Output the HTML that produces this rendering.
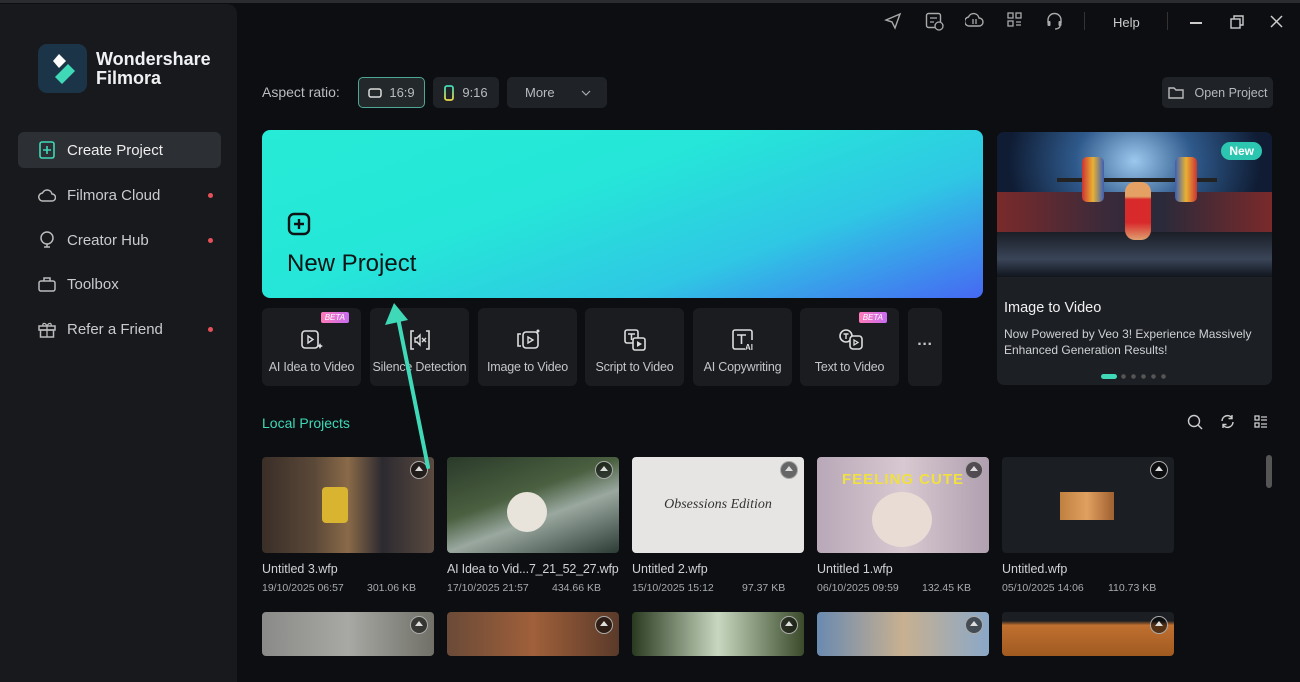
<!DOCTYPE html>
<html><head><meta charset="utf-8"><style>
*{margin:0;padding:0;box-sizing:border-box}
body{width:1300px;height:682px;background:#0c0e11;font-family:"Liberation Sans",sans-serif;color:#d8dadd;position:relative;overflow:hidden}
.abs{position:absolute}
.side{left:0;top:4px;width:237px;height:678px;background:#17191c;border-radius:0 10px 0 0}
.nav{position:absolute;left:18px;width:203px;height:36px;border-radius:6px;display:flex;align-items:center;padding-left:20px;font-size:15px;color:#c9cbce}
.nav svg{margin-right:11px;width:18px}
.dot{position:absolute;right:8px;top:16px;width:5px;height:5px;border-radius:50%;background:#e5505a}
.btn{position:absolute;top:77px;height:31px;border-radius:5px;background:#1f2226;font-size:13px;color:#b8bbbf;display:flex;align-items:center;justify-content:center}
.tile{position:absolute;top:308px;width:99px;height:78px;background:#1a1c20;border-radius:6px;font-size:12.5px;color:#c3c5c8;text-align:center}
.tile svg{position:absolute;left:38px;top:20px}
.tile span{position:absolute;left:0;right:0;top:52px;white-space:nowrap;letter-spacing:-0.2px}
.beta{position:absolute;right:12px;top:4px;background:linear-gradient(90deg,#ff7ab8,#c86cf0);font-size:8px;color:#fff;padding:1px 4px;border-radius:2px;font-style:italic}
.th{position:absolute;width:172px;height:96px;border-radius:4px;overflow:hidden}
.up{position:absolute;right:6px;top:4px;width:18px;height:18px;border-radius:50%;background:rgba(0,0,0,.55);border:1px solid #aaa}
.up:after{content:"";position:absolute;left:4px;top:4px;width:0;height:0;border-left:4px solid transparent;border-right:4px solid transparent;border-bottom:5px solid #ddd}
.nm{position:absolute;font-size:12.5px;color:#d0d2d5}
.dt{position:absolute;font-size:10.5px;color:#a8abaf}
.ti{position:absolute;top:12px}
</style></head><body>
<div class="abs" style="left:0;top:0;width:1300px;height:3px;background:#2a2c30"></div>
<div class="abs side"></div>
<div class="abs" style="left:38px;top:44px;width:49px;height:49px;border-radius:9px;background:#1c3447"></div>
<svg class="abs" style="left:48px;top:52px" width="30" height="34" viewBox="0 0 30 34"><path d="M11 2l7 7-7 7-6-7z" fill="#fff"/><path d="M20 12l7 7-13 13-7-7z" fill="#3fd9b8"/></svg>
<div class="abs" style="left:96px;top:50px;font-size:18px;font-weight:bold;color:#eef0f2;line-height:19px">Wondershare<br>Filmora</div>
<div class="nav" style="top:132px;background:#2c2f33;color:#eee"><svg height="18" viewBox="0 0 16 18"><rect x="1" y="1" width="14" height="16" rx="2" fill="none" stroke="#3fd9b8" stroke-width="1.6"/><path d="M8 5v8M4 9h8" stroke="#3fd9b8" stroke-width="1.6"/></svg>Create Project</div>
<div class="nav" style="top:177px"><svg height="14" viewBox="0 0 18 14"><path d="M5 13h9a3.5 3.5 0 0 0 0-7 5 5 0 0 0-9.5-1A4 4 0 0 0 5 13z" fill="none" stroke="#bbb" stroke-width="1.5"/></svg>Filmora Cloud<i class="dot"></i></div>
<div class="nav" style="top:222px"><svg height="18" viewBox="0 0 16 18"><circle cx="8" cy="7" r="6" fill="none" stroke="#bbb" stroke-width="1.5"/><path d="M5 16h6M8 13v3" stroke="#bbb" stroke-width="1.5"/></svg>Creator Hub<i class="dot"></i></div>
<div class="nav" style="top:266px"><svg height="16" viewBox="0 0 18 16"><rect x="1" y="5" width="16" height="10" rx="2" fill="none" stroke="#bbb" stroke-width="1.5"/><path d="M6 5V2h6v3" fill="none" stroke="#bbb" stroke-width="1.5"/></svg>Toolbox</div>
<div class="nav" style="top:311px"><svg height="17" viewBox="0 0 18 17"><rect x="1" y="5" width="16" height="4" fill="none" stroke="#bbb" stroke-width="1.5"/><rect x="2.5" y="9" width="13" height="7" fill="none" stroke="#bbb" stroke-width="1.5"/><path d="M9 5v11M9 5C7 1 4 2 5 5M9 5c2-4 5-3 4 0" fill="none" stroke="#bbb" stroke-width="1.3"/></svg>Refer a Friend<i class="dot"></i></div>

<svg class="ti" style="left:884px" width="18" height="18" viewBox="0 0 18 18"><path d="M2 8l14-6-5 14-3-6z" fill="none" stroke="#aaa" stroke-width="1.4"/></svg>
<svg class="ti" style="left:925px" width="19" height="19" viewBox="0 0 19 19"><rect x="1.5" y="1.5" width="14" height="14" rx="2" fill="none" stroke="#aaa" stroke-width="1.4"/><path d="M5 6h7M5 10h4" stroke="#aaa" stroke-width="1.3"/><circle cx="14" cy="14" r="4" fill="#0c0e11" stroke="#aaa" stroke-width="1.3"/></svg>
<svg class="ti" style="left:965px" width="19" height="16" viewBox="0 0 19 16"><path d="M5 14h9a4 4 0 0 0 0-8 5.5 5.5 0 0 0-10.5-1A4.5 4.5 0 0 0 5 14z" fill="none" stroke="#aaa" stroke-width="1.4"/><path d="M8 7v5M11 7v5" stroke="#aaa" stroke-width="1.3"/></svg>
<svg class="ti" style="left:1007px" width="15" height="15" viewBox="0 0 15 15"><g fill="none" stroke="#aaa" stroke-width="1.3"><rect x="1" y="1" width="5" height="5"/><rect x="9" y="1" width="5" height="5"/><rect x="1" y="9" width="5" height="5"/><path d="M9 10h5M9 13h5"/></g></svg>
<svg class="ti" style="left:1046px" width="17" height="18" viewBox="0 0 17 18"><path d="M2 11V8a6.5 6.5 0 0 1 13 0v3" fill="none" stroke="#aaa" stroke-width="1.4"/><rect x="1.5" y="9" width="3" height="5" rx="1" fill="#aaa"/><rect x="12.5" y="9" width="3" height="5" rx="1" fill="#aaa"/><path d="M14 14c0 2-3 3-5 3" fill="none" stroke="#aaa" stroke-width="1.3"/></svg>
<div class="abs" style="left:1084px;top:12px;width:1px;height:18px;background:#333"></div>
<div class="abs" style="left:1113px;top:15px;font-size:13px;color:#ccc">Help</div>
<div class="abs" style="left:1167px;top:12px;width:1px;height:18px;background:#333"></div>
<div class="abs" style="left:1190px;top:22px;width:12px;height:1.5px;background:#ccc"></div>
<svg class="abs" style="left:1230px;top:15px" width="14" height="14" viewBox="0 0 14 14"><rect x="1" y="4" width="9" height="9" fill="none" stroke="#ccc" stroke-width="1.4"/><path d="M4 4V1h9v9h-3" fill="none" stroke="#ccc" stroke-width="1.4"/></svg>
<svg class="abs" style="left:1270px;top:15px" width="13" height="13" viewBox="0 0 13 13"><path d="M1 1l11 11M12 1L1 12" stroke="#ccc" stroke-width="1.5"/></svg>

<div class="abs" style="left:262px;top:84px;font-size:14px;color:#b9bcc0">Aspect ratio:</div>
<div class="btn" style="left:358px;width:67px;border:1px solid #4ea897;background:#23282a"><svg width="14" height="10" style="margin-right:7px"><rect x="1" y="1" width="12" height="8" rx="2" fill="none" stroke="#ddd" stroke-width="1.5"/></svg>16:9</div>
<div class="btn" style="left:433px;width:66px"><svg width="10" height="16" style="margin-right:8px"><defs><linearGradient id="g1" x1="0" y1="0" x2="0" y2="1"><stop offset="0" stop-color="#3fd9b8"/><stop offset="1" stop-color="#e8d84a"/></linearGradient></defs><rect x="1" y="1" width="8" height="14" rx="2" fill="none" stroke="url(#g1)" stroke-width="1.8"/></svg>9:16</div>
<div class="btn" style="left:507px;width:100px;justify-content:flex-start;padding-left:18px">More<svg width="10" height="6" style="position:absolute;right:16px;top:13px"><path d="M1 1l4 4 4-4" fill="none" stroke="#aaa" stroke-width="1.2"/></svg></div>
<div class="btn" style="left:1162px;width:111px;color:#b5b8bc;font-size:12.5px"><svg width="16" height="13" style="margin-right:11px"><path d="M1 2h5l2 2h7v8H1z" fill="none" stroke="#bbb" stroke-width="1.4"/></svg>Open Project</div>

<div class="abs" style="left:262px;top:130px;width:721px;height:168px;border-radius:8px;background:linear-gradient(160deg,#26ebd6 0%,#25e6d8 40%,#2fc7e4 70%,#4668f3 100%)"></div>
<svg class="abs" style="left:287px;top:212px" width="24" height="24" viewBox="0 0 24 24"><rect x="2" y="2" width="20" height="20" rx="5" fill="none" stroke="#0d1416" stroke-width="2.4"/><path d="M12 7v10M7 12h10" stroke="#0d1416" stroke-width="2.4"/></svg>
<div class="abs" style="left:287px;top:250px;font-size:24px;color:#0d1416">New Project</div>

<div class="tile" style="left:262px"><i class="beta">BETA</i><svg width="24" height="24" viewBox="0 0 24 24"><rect x="2" y="3" width="16" height="17" rx="3" fill="none" stroke="#ddd" stroke-width="1.6"/><path d="M8 8v7l5-3.5z" fill="none" stroke="#ddd" stroke-width="1.4"/><path d="M20 15l1 2 2 1-2 1-1 2-1-2-2-1 2-1z" fill="#ddd"/></svg><span>AI Idea to Video</span></div>
<div class="tile" style="left:370px"><svg width="24" height="24" viewBox="0 0 24 24"><path d="M6 3H3v18h3M18 3h3v18h-3" fill="none" stroke="#ddd" stroke-width="1.6"/><path d="M7 10h2l3-3v10l-3-3H7z" fill="none" stroke="#ddd" stroke-width="1.4"/><path d="M14 10l4 4M18 10l-4 4" stroke="#ddd" stroke-width="1.4"/></svg><span>Silence Detection</span></div>
<div class="tile" style="left:478px"><svg width="26" height="24" viewBox="0 0 26 24"><rect x="7" y="4" width="15" height="16" rx="3" fill="none" stroke="#ddd" stroke-width="1.6"/><path d="M5 6H2v12h3" fill="none" stroke="#ddd" stroke-width="1.6"/><path d="M12 9v6l5-3z" fill="none" stroke="#ddd" stroke-width="1.4"/><circle cx="22" cy="3" r="1.5" fill="#ddd"/></svg><span>Image to Video</span></div>
<div class="tile" style="left:585px"><svg width="24" height="24" viewBox="0 0 24 24"><rect x="2" y="2" width="13" height="13" rx="2" fill="none" stroke="#ddd" stroke-width="1.6"/><path d="M5 6h7M8.5 6v6" stroke="#ddd" stroke-width="1.5"/><rect x="10" y="10" width="12" height="12" rx="2" fill="#1a1c20" stroke="#ddd" stroke-width="1.6"/><path d="M14 13v6l5-3z" fill="#ddd"/></svg><span>Script to Video</span></div>
<div class="tile" style="left:693px"><svg width="24" height="24" viewBox="0 0 24 24"><path d="M14 21H4a2 2 0 0 1-2-2V4a2 2 0 0 1 2-2h15a2 2 0 0 1 2 2v8" fill="none" stroke="#ddd" stroke-width="1.6"/><path d="M6 7h9M10.5 7v9" stroke="#ddd" stroke-width="1.6"/><text x="14" y="22" font-size="8" fill="#ddd" font-family="Liberation Sans" font-weight="bold">AI</text></svg><span>AI Copywriting</span></div>
<div class="tile" style="left:800px"><i class="beta">BETA</i><svg width="26" height="24" viewBox="0 0 26 24"><circle cx="8" cy="8" r="6" fill="none" stroke="#ddd" stroke-width="1.6"/><path d="M5.5 6h5M8 6v5" stroke="#ddd" stroke-width="1.4"/><rect x="12" y="8" width="12" height="13" rx="3" fill="#1a1c20" stroke="#ddd" stroke-width="1.6"/><path d="M16 12v5l4-2.5z" fill="none" stroke="#ddd" stroke-width="1.3"/></svg><span>Text to Video</span></div>
<div class="tile" style="left:908px;width:34px"><span style="top:28px;font-size:16px;font-weight:bold">···</span></div>

<div class="abs" style="left:997px;top:132px;width:275px;height:253px;border-radius:7px;background:#1c1f23;overflow:hidden">
<div style="height:145px;background:radial-gradient(ellipse at 50% 20%,#9cc8ee 0%,#2f5a8c 30%,#0f1c33 65%),#0f1c33;position:relative">
<div style="position:absolute;left:0;right:0;top:60px;height:40px;background:linear-gradient(90deg,#7a2a2a,#3a2a3a 40%,#2a2a3a 60%,#7a2a2a)"></div>
<div style="position:absolute;left:0;right:0;top:100px;height:45px;background:linear-gradient(#1a1e26,#3a4558 60%,#10151d)"></div>
<div style="position:absolute;left:60px;top:46px;width:160px;height:4px;background:#222"></div>
<div style="position:absolute;left:85px;top:25px;width:22px;height:45px;border-radius:5px;background:linear-gradient(90deg,#c33,#e9b233,#3a5fb8)"></div>
<div style="position:absolute;left:178px;top:25px;width:22px;height:45px;border-radius:5px;background:linear-gradient(90deg,#3a5fb8,#e9b233,#c33)"></div>
<div style="position:absolute;left:128px;top:50px;width:26px;height:58px;border-radius:10px;background:linear-gradient(#e5a063 25%,#d82a2a 30%,#d82a2a 70%,#e0a070)"></div>
<div style="position:absolute;right:10px;top:10px;background:#2cc5b0;color:#fff;font-size:12px;font-weight:bold;padding:2px 8px;border-radius:10px">New</div>
</div>
<div style="position:absolute;left:7px;top:168px;font-size:14.5px;color:#f0f0f0">Image to Video</div>
<div style="position:absolute;left:7px;top:194px;font-size:12px;line-height:16px;color:#cfd1d4">Now Powered by Veo 3! Experience Massively Enhanced Generation Results!</div>
<div style="position:absolute;left:104px;top:242px;width:16px;height:5px;border-radius:3px;background:#3fd9b8"></div>
<div style="position:absolute;left:124px;top:242px;width:50px;height:5px;background:radial-gradient(circle at 2.5px 2.5px,#555 2px,transparent 2.5px) 0 0/10px 5px"></div>
</div>

<div class="abs" style="left:262px;top:415px;font-size:14px;color:#3fd9b8">Local Projects</div>
<svg class="abs" style="left:1187px;top:414px" width="16" height="16"><circle cx="7" cy="7" r="5.5" fill="none" stroke="#ccc" stroke-width="1.4"/><path d="M11 11l4 4" stroke="#ccc" stroke-width="1.5"/></svg>
<svg class="abs" style="left:1220px;top:414px" width="15" height="15"><path d="M2 7a5.5 5.5 0 0 1 10-3M13 8a5.5 5.5 0 0 1-10 3" fill="none" stroke="#ccc" stroke-width="1.5"/><path d="M12 1v3.5H8.5M3 14v-3.5h3.5" fill="none" stroke="#ccc" stroke-width="1.4"/></svg>
<svg class="abs" style="left:1254px;top:415px" width="14" height="14"><g fill="none" stroke="#ccc" stroke-width="1.3"><rect x="1" y="1" width="4" height="4"/><rect x="1" y="8" width="4" height="4"/><path d="M7 2h6M7 5h6M7 9h6M7 12h6"/></g></svg>
<div class="abs" style="left:1266px;top:455px;width:6px;height:33px;border-radius:3px;background:#555"></div>

<div class="th" style="left:262px;top:457px;background:linear-gradient(90deg,#3a2e28,#5a4838 30%,#8a6a48 50%,#2c2a30 70%,#5a4a40)"><div style="position:absolute;left:60px;top:30px;width:26px;height:36px;background:#d8b430;border-radius:4px"></div><i class="up"></i></div>
<div class="th" style="left:447px;top:457px;background:linear-gradient(160deg,#2a3a2a,#4a6040 40%,#9aa8a0 60%,#2c3c34)"><div style="position:absolute;left:60px;top:35px;width:40px;height:40px;background:#e8e4dc;border-radius:50%"></div><i class="up"></i></div>
<div class="th" style="left:632px;top:457px;background:#e6e5e3"><div style="position:absolute;left:0;right:0;top:40px;text-align:center;font-family:'Liberation Serif',serif;font-style:italic;font-size:14px;color:#333">Obsessions Edition</div><i class="up" style="background:#666"></i></div>
<div class="th" style="left:817px;top:457px;background:linear-gradient(90deg,#b8a8b8,#d8c8d0 50%,#b0a0b0)"><div style="position:absolute;left:0;right:0;top:14px;text-align:center;font-weight:bold;font-size:15px;color:#f0e040;letter-spacing:1px">FEELING CUTE</div><div style="position:absolute;left:55px;top:35px;width:60px;height:55px;background:#e8dcd4;border-radius:50%"></div><i class="up"></i></div>
<div class="th" style="left:1002px;top:457px;background:#1b1e22"><div style="position:absolute;left:58px;top:35px;width:54px;height:28px;background:linear-gradient(90deg,#c08040,#e0a060,#a06030)"></div><i class="up"></i></div>

<div class="nm" style="left:262px;top:562px">Untitled 3.wfp</div><div class="dt" style="left:262px;top:582px">19/10/2025 06:57</div><div class="dt" style="left:367px;top:582px">301.06 KB</div>
<div class="nm" style="left:447px;top:562px;letter-spacing:-0.2px">AI Idea to Vid...7_21_52_27.wfp</div><div class="dt" style="left:447px;top:582px">17/10/2025 21:57</div><div class="dt" style="left:552px;top:582px">434.66 KB</div>
<div class="nm" style="left:632px;top:562px">Untitled 2.wfp</div><div class="dt" style="left:632px;top:582px">15/10/2025 15:12</div><div class="dt" style="left:742px;top:582px">97.37 KB</div>
<div class="nm" style="left:817px;top:562px">Untitled 1.wfp</div><div class="dt" style="left:817px;top:582px">06/10/2025 09:59</div><div class="dt" style="left:922px;top:582px">132.45 KB</div>
<div class="nm" style="left:1002px;top:562px">Untitled.wfp</div><div class="dt" style="left:1002px;top:582px">05/10/2025 14:06</div><div class="dt" style="left:1108px;top:582px">110.73 KB</div>

<div class="th" style="left:262px;top:612px;height:44px;background:linear-gradient(90deg,#8a8a88,#a8a8a4,#707068)"><i class="up"></i></div>
<div class="th" style="left:447px;top:612px;height:44px;background:linear-gradient(90deg,#6a4a38,#a0603a,#5a3a2a)"><i class="up"></i></div>
<div class="th" style="left:632px;top:612px;height:44px;background:linear-gradient(90deg,#2a3a20,#c8d8c0,#3a4a2a)"><i class="up"></i></div>
<div class="th" style="left:817px;top:612px;height:44px;background:linear-gradient(90deg,#6a8ab0,#c8b090,#8aa8c8)"><i class="up"></i></div>
<div class="th" style="left:1002px;top:612px;height:44px;background:linear-gradient(#1b1e22 20%,#c07030 30%,#a05a20)"><i class="up"></i></div>

<svg class="abs" style="left:380px;top:295px" width="60" height="185"><path d="M48 172L17 18" stroke="#3fd9b8" stroke-width="4" stroke-linecap="round"/><path d="M14 8L5 30 28 25z" fill="#3fd9b8"/></svg>
</body></html>
